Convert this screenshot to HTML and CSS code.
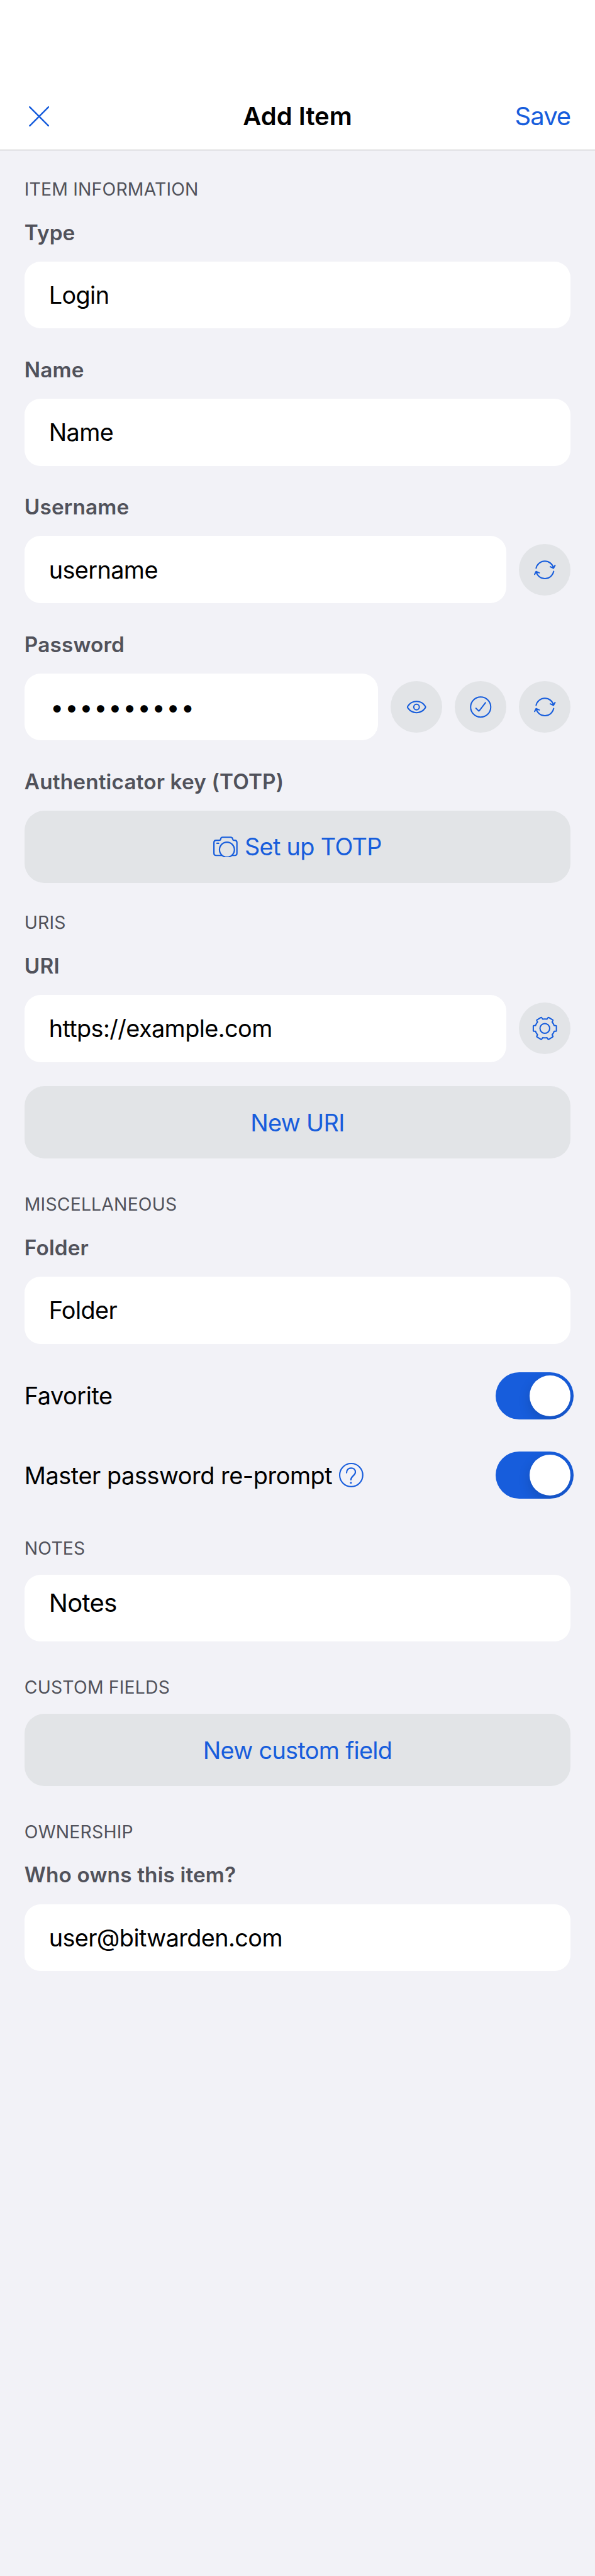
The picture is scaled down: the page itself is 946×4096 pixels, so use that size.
FILE: index.html
```html
<!DOCTYPE html>
<html lang="en">
<head>
<meta charset="utf-8">
<title>Add Item</title>
<link rel="stylesheet" href="styles.css">
</head>
<body>
<svg class="defs" aria-hidden="true">
  <symbol id="refresh" viewBox="0 0 102 102"><path d="M33.8 47.7A17.6 17.6 0 0 1 68.2 47.5M61.7 44.7L68 47.6 71 42M68.4 53.7A17.6 17.6 0 0 1 33.9 54.2M31 59.7L33.8 54 40 56.8"/></symbol>
  <symbol id="eye" viewBox="0 0 102 102"><path d="M33.7 49.6C42 36.8 60 36.8 68.3 49.6Q69.4 51 68.3 52.4C60 65.2 42 65.2 33.7 52.4Q32.6 51 33.7 49.6Z"/><circle cx="51" cy="51" r="5.5"/></symbol>
  <symbol id="check" viewBox="0 0 102 102"><circle cx="51" cy="51" r="19.8"/><path d="M41.8 53.4L46.7 58.3Q47.5 59 48.2 58.2L60.4 42.4"/></symbol>
  <symbol id="gear" viewBox="0 0 102 102"><path d="M69.3 45.3H72.5Q73.7 45.3 73.7 46.5V55.5Q73.7 56.7 72.5 56.7H69.3Q68 60.5 65.3 63.7L66.9 66.2Q67.3 67.3 66.3 67.9L58.7 72.4Q57.7 73 57.1 72L55.3 69.3Q51 70 46.7 69.3L44.9 72Q44.3 73 43.3 72.4L35.7 67.9Q34.7 67.3 35.1 66.2L36.7 63.7Q34 60.5 32.7 56.7H29.5Q28.3 56.7 28.3 55.5V46.5Q28.3 45.3 29.5 45.3H32.7Q34 41.5 36.7 38.3L35.1 35.8Q34.7 34.7 35.7 34.1L43.3 29.6Q44.3 29 44.9 30L46.7 32.7Q51 32 55.3 32.7L57.1 30Q57.7 29 58.7 29.6L66.3 34.1Q67.3 34.7 66.9 35.8L65.3 38.3Q68 41.5 69.3 45.3Z"/><circle cx="51" cy="51" r="9.5"/></symbol>
</svg>

<header class="navbar">
  <svg class="close" viewBox="0 0 40 40"><path d="M1.5 1.5L38.5 38.5M38.5 1.5L1.5 38.5"/></svg>
  <h1 class="navbar-title">Add Item</h1>
  <a class="save">Save</a>
</header>

<main class="form">
  <section class="section">
    <h2 class="section-title">ITEM INFORMATION</h2>
    <div class="group">
      <label class="label">Type</label>
      <div class="row"><div class="field">Login</div></div>
    </div>
    <div class="group">
      <label class="label">Name</label>
      <div class="row"><div class="field">Name</div></div>
    </div>
    <div class="group">
      <label class="label">Username</label>
      <div class="row">
        <div class="field">username</div>
        <span class="round"><svg class="icon"><use href="#refresh"/></svg></span>
      </div>
    </div>
    <div class="group">
      <label class="label">Password</label>
      <div class="row">
        <div class="field secret">••••••••••</div>
        <span class="round"><svg class="icon"><use href="#eye"/></svg></span>
        <span class="round"><svg class="icon"><use href="#check"/></svg></span>
        <span class="round"><svg class="icon"><use href="#refresh"/></svg></span>
      </div>
    </div>
    <div class="group">
      <label class="label">Authenticator key (TOTP)</label>
      <div class="button">
        <svg class="camera" viewBox="0 0 48 42"><path d="M18 37.4H5.6Q1.4 37.4 1.4 33.2V12Q1.4 7.5 5.6 7.5H12Q14.4 7.5 14.6 5.5 15 1.5 18.5 1.5H34Q37.8 1.5 38.4 5.5 38.7 7.5 40.4 7.5H42.4Q46.6 7.5 46.6 12V33.2Q46.6 37.4 42.4 37.4H36M7.3 13.5H10.7"/><circle cx="27" cy="26" r="14.7"/></svg>
        <span>Set up TOTP</span>
      </div>
    </div>
  </section>

  <section class="section uris">
    <h2 class="section-title">URIS</h2>
    <div class="group">
      <label class="label">URI</label>
      <div class="row">
        <div class="field">https://example.com</div>
        <span class="round"><svg class="icon"><use href="#gear"/></svg></span>
      </div>
    </div>
    <div class="button after-field">New URI</div>
  </section>

  <section class="section">
    <h2 class="section-title">MISCELLANEOUS</h2>
    <div class="group">
      <label class="label">Folder</label>
      <div class="row"><div class="field">Folder</div></div>
    </div>
    <div class="toggles">
      <div class="toggle-row"><span>Favorite</span><span class="switch"></span></div>
      <div class="toggle-row">
        <span>Master password re-prompt</span>
        <svg class="help" viewBox="0 0 48 48"><circle cx="24" cy="24" r="22.7"/><path d="M14.9 19.6C14.9 13.6 18.6 10.3 23.7 10.3 28.8 10.3 32.2 13.5 32.2 18.2 32.2 25.5 23.4 25.5 23.4 33.4"/><circle class="dot" cx="23.4" cy="39.3" r="1.9"/></svg>
        <span class="switch"></span>
      </div>
    </div>
  </section>

  <section class="section notes-section">
    <h2 class="section-title">NOTES</h2>
    <div class="field notes">Notes</div>
  </section>

  <section class="section">
    <h2 class="section-title">CUSTOM FIELDS</h2>
    <div class="button">New custom field</div>
  </section>

  <section class="section">
    <h2 class="section-title">OWNERSHIP</h2>
    <div class="group">
      <label class="label">Who owns this item?</label>
      <div class="row"><div class="field">user@bitwarden.com</div></div>
    </div>
  </section>
</main>
</body>
</html>
```
FILE: styles.css
```css
/* 1rem = 10 points of the 390pt-wide layout */
html { font-size: 24.265px; }
* { box-sizing: border-box; }
body {
  margin: 0;
  height: 4096px;
  overflow: hidden;
  background: #f2f2f7;
  color: #000;
  font-family: Inter, "Liberation Sans", sans-serif;
  font-size: 1.56rem;
}
svg { fill: none; stroke: #175ddc; stroke-width: 2.5; stroke-linecap: round; stroke-linejoin: round; display: block; flex: none; }
.defs { position: absolute; width: 0; height: 0; }

.navbar {
  height: 9.833rem;
  padding: 5.45rem 1.6rem 0;
  background: #fff;
  border-bottom: 1px solid #a9a9ac;
  display: grid;
  grid-template-columns: 1fr auto 1fr;
  align-items: center;
  font-size: 1.65rem;
}
.close { width: 1.333rem; height: 1.333rem; margin-left: .3rem; stroke-width: 3; }
.navbar-title { margin: 0; font-size: 1.65rem; font-weight: 600; }
.save { color: #175ddc; justify-self: end; letter-spacing: -.025em; }

.form { padding: 1.74rem 1.6rem 0; }
.section + .section { margin-top: 2.173rem; }
.section.uris { margin-top: 1.773rem; }
.section.notes-section { margin-top: 2.4rem; }
.section-title { margin: 0; height: 1.6rem; line-height: 1.68rem; font-size: 1.17rem; font-weight: 400; letter-spacing: .006em; color: #51525b; }
.section-title + .group { margin-top: 1.067rem; }
.section-title + .field, .section-title + .button { margin-top: .96rem; }
.group + .group { margin-top: 1.707rem; }
.label { display: block; height: 2rem; line-height: 2.04rem; margin-bottom: .893rem; font-size: 1.375rem; font-weight: 600; letter-spacing: .004em; color: #51525b; }

.row { display: flex; align-items: center; gap: .8rem; }
.field { flex: 1; height: 4.4rem; border-radius: 1.05rem; background: #fff; padding: 0 1.6rem; display: flex; align-items: center; letter-spacing: -.016em; }
.secret { letter-spacing: .047em; padding-left: 1.7rem; }
.round { width: 3.4rem; height: 3.4rem; border-radius: 50%; background: #e2e4e7; flex: none; }
.icon { width: 100%; height: 100%; }
.button { height: 4.733rem; border-radius: 1.3rem; background: #e2e4e7; color: #175ddc; display: flex; align-items: center; justify-content: center; gap: .45rem; letter-spacing: -.018em; }
.after-field { margin-top: 1.6rem; }
.camera { width: 1.6rem; height: 1.4rem; stroke-width: 2.7; }
.notes { align-items: flex-start; font-size: 1.65rem; line-height: 2rem; padding-top: .88rem; }

.toggles { margin-top: 1.867rem; display: grid; gap: 2.1rem; }
.toggle-row { display: flex; align-items: center; height: 3.1rem; letter-spacing: -.012em; }
.help { width: 1.6rem; height: 1.6rem; margin-left: .43rem; stroke-width: 2.6; }
.dot { fill: #175ddc; stroke: none; }
.switch { width: 5.1rem; height: 3.1rem; margin: 0 -.2rem 0 auto; padding: .2rem; border-radius: 1.55rem; background: #175ddc; overflow: hidden; }
.switch::after { content: ""; display: block; width: 2.7rem; height: 2.7rem; margin-left: auto; border-radius: 50%; background: #fff; box-shadow: 0 .3rem .8rem rgba(0, 0, 0, .15); }
```
